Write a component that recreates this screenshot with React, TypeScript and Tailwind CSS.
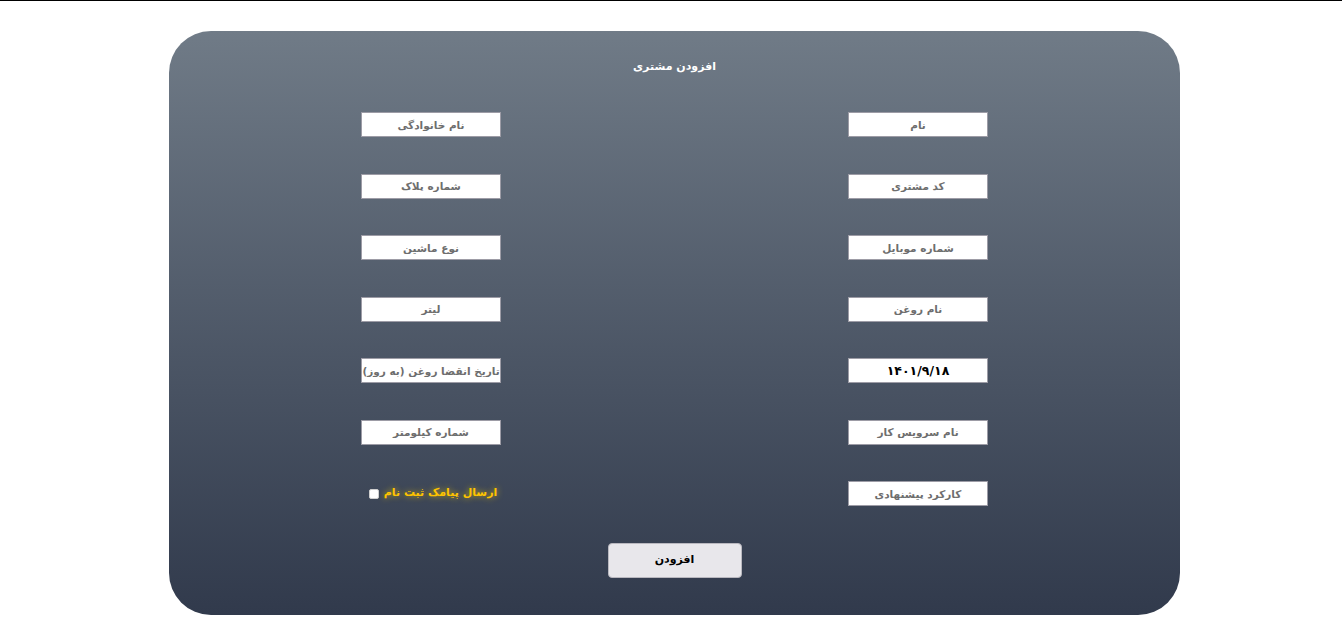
import React from "react";

const font = { fontFamily: '"DejaVu Sans", "Noto Sans", sans-serif' };

function Field({ placeholder, value }: { placeholder?: string; value?: string }) {
  return (
    <input
      dir="rtl"
      readOnly
      defaultValue={value}
      placeholder={placeholder}
      className={
        "w-[140px] h-[25px] bg-white border border-[#9d9ca6] text-center font-bold text-black placeholder:text-[#6e6e6e] outline-none px-0 " +
        (value ? "text-[12.5px]" : "text-[10.5px]")
      }
      style={font}
    />
  );
}

export default function App() {
  const right = ["نام", "کد مشتری", "شماره موبایل", "نام روغن", null, "نام سرویس کار", "کارکرد پیشنهادی"];
  const left = ["نام خانوادگی", "شماره پلاک", "نوع ماشین", "لیتر", "تاریخ انقضا روغن (به روز)", "شماره کیلومتر"];
  return (
    <div className="w-full h-[638px] bg-white" style={font}>
      <div className="h-px bg-black" />
      <div className="pt-[30px] pl-[169px]">
        <div className="w-[1011px] h-[584px] rounded-[42px] bg-gradient-to-b from-[#707b87] to-[#313a4c] flex flex-col items-center" dir="rtl">
          <div className="pt-[28px] h-[81px] text-white text-[11px] font-bold leading-[16px]">افزودن مشتری</div>
          <div className="w-full px-[192px] flex justify-between">
            <div className="flex flex-col gap-y-[36.5px]">
              {right.map((t, i) =>
                t === null ? <Field key={i} value="۱۴۰۱/۹/۱۸" /> : <Field key={i} placeholder={t} />
              )}
            </div>
            <div className="flex flex-col gap-y-[36.5px]">
              {left.map((t, i) => (
                <Field key={i} placeholder={t} />
              ))}
              <div className="w-[140px] h-[25px] flex items-center justify-center gap-[5px] pl-[4px]">
                <span className="text-[11px] font-bold text-[#ffc400] [text-shadow:0_0_6px_rgba(255,215,0,0.75)]">
                  ارسال پیامک ثبت نام
                </span>
                <span className="w-[10px] h-[10px] bg-white rounded-[2px] border border-[#cfcfcf]" />
              </div>
            </div>
          </div>
          <button className="mt-[37px] w-[134px] h-[35px] rounded-[4px] bg-[#e8e7eb] border border-[#b9b8bf] text-black text-[11px] font-bold" style={font}>
            افزودن
          </button>
        </div>
      </div>
    </div>
  );
}
